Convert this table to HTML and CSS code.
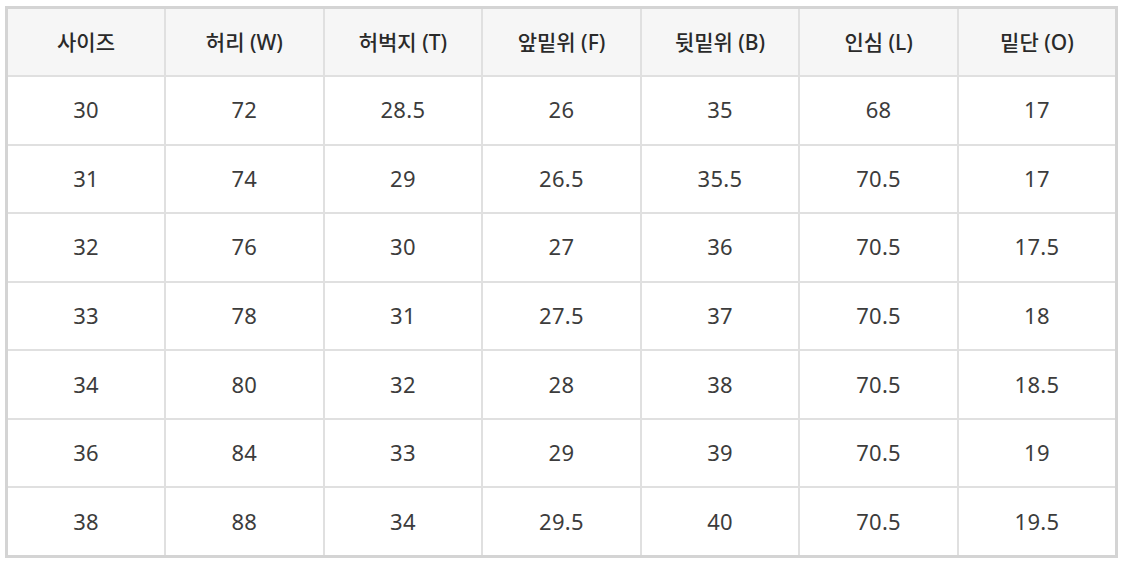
FILE: index.html
```html
<!DOCTYPE html>
<html lang="ko">
<head>
<meta charset="utf-8">
<link rel="stylesheet" href="styles.css">
</head>
<body>
<div class="wrap">
<table class="size-table">
<thead>
<tr><th>사이즈</th><th>허리 (W)</th><th>허벅지 (T)</th><th>앞밑위 (F)</th><th>뒷밑위 (B)</th><th>인심 (L)</th><th>밑단 (O)</th></tr>
</thead>
<tbody>
<tr><td>30</td><td>72</td><td>28.5</td><td>26</td><td>35</td><td>68</td><td>17</td></tr>
<tr><td>31</td><td>74</td><td>29</td><td>26.5</td><td>35.5</td><td>70.5</td><td>17</td></tr>
<tr><td>32</td><td>76</td><td>30</td><td>27</td><td>36</td><td>70.5</td><td>17.5</td></tr>
<tr><td>33</td><td>78</td><td>31</td><td>27.5</td><td>37</td><td>70.5</td><td>18</td></tr>
<tr><td>34</td><td>80</td><td>32</td><td>28</td><td>38</td><td>70.5</td><td>18.5</td></tr>
<tr><td>36</td><td>84</td><td>33</td><td>29</td><td>39</td><td>70.5</td><td>19</td></tr>
<tr><td>38</td><td>88</td><td>34</td><td>29.5</td><td>40</td><td>70.5</td><td>19.5</td></tr>
</tbody>
</table>
</div>
</body>
</html>
```
FILE: styles.css
```css
html, body {
  margin: 0;
  padding: 0;
  background: #ffffff;
}
.wrap {
  padding: 6px 0 0 5px;
}
.size-table {
  width: 1113px;
  height: 552px;
  table-layout: fixed;
  border-collapse: collapse;
  border: 3px solid #d4d4d4;
  font-family: "Noto Sans", "Noto Sans CJK KR", sans-serif;
  color: #333333;
}
.size-table th,
.size-table td {
  border: 2px solid #e0e0e0;
  text-align: center;
  vertical-align: middle;
  padding: 0 0 2px 0;
  height: 64px;
}
.size-table th {
  background: #f6f6f6;
  font-size: 21px;
  font-weight: 500;
  color: #2a2a2a;
}
.size-table td {
  font-size: 22px;
  font-weight: 400;
  color: #3c3c3c;
  letter-spacing: 0.3px;
}
```
